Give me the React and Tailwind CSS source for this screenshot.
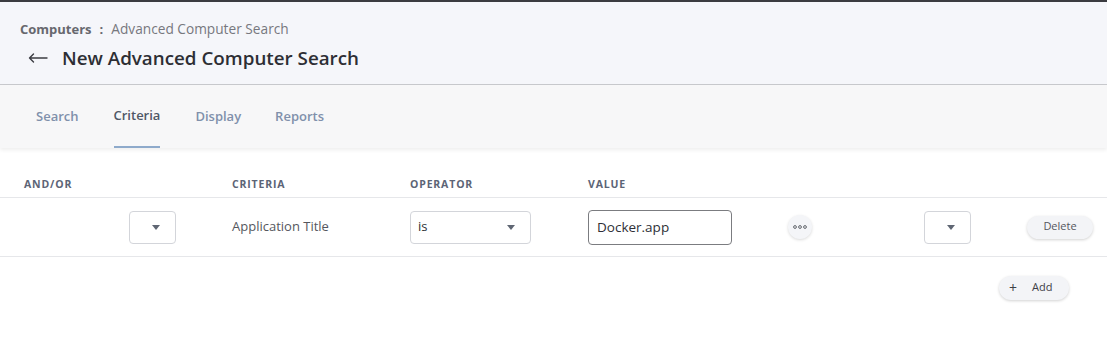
import React from "react";

function Caret() {
  return (
    <svg width="8" height="5" viewBox="0 0 8 5" className="text-[#5f6673]">
      <path d="M0 0h8L4 5z" fill="currentColor" />
    </svg>
  );
}

function SmallSelect() {
  return (
    <div className="flex h-[33px] w-[47px] items-center justify-end rounded-[4px] border border-[#d3d5da] bg-white pr-[15px]">
      <Caret />
    </div>
  );
}

export default function App() {
  return (
    <div className="min-h-[349px] bg-white font-['Open_Sans',sans-serif] text-[#2e2f36]">
      <div className="h-[2px] bg-[#3b3b40]" />
      <header className="h-[83px] border-b border-[#c9cace] bg-[#f5f6fa] px-5 pt-[19px]">
        <div className="flex items-center text-[13px] leading-4">
          <span className="font-bold text-[#67686e]">Computers</span>
          <span className="mx-[8px] font-bold text-[#67686e]">:</span>
          <span className="text-[13.7px] text-[#77787e]">Advanced Computer Search</span>
        </div>
        <div className="mt-[9px] flex items-center">
          <svg width="20" height="10" viewBox="0 0 20 10" className="ml-[8px]">
            <path d="M19 5H1.5M5.5 1L1.5 5l4 4" fill="none" stroke="#3b3c42" strokeWidth="1.4" strokeLinecap="round" strokeLinejoin="round" />
          </svg>
          <h1 className="ml-[14px] text-[18.8px] font-semibold leading-6 text-[#2d2e34]">
            New Advanced Computer Search
          </h1>
        </div>
      </header>
      <nav className="relative flex h-[63px] items-stretch bg-[#f7f7f8] bg-[radial-gradient(#eeeeee_0.6px,transparent_0.6px)] bg-[length:4px_4px] pl-9 shadow-[0_2px_4px_rgba(0,0,0,0.07)]">
        <div className="flex items-center text-[13px] font-semibold text-[#8090ab]">Search</div>
        <div className="ml-[35px] flex flex-col justify-center">
          <div className="flex flex-1 items-center text-[13px] font-semibold text-[#4f5766]">Criteria</div>
          <div className="h-[2px] bg-[#8eaacb]" />
        </div>
        <div className="ml-[35px] flex items-center text-[13px] font-semibold text-[#8090ab]">Display</div>
        <div className="ml-[34px] flex items-center text-[13px] font-semibold text-[#8090ab]">Reports</div>
      </nav>
      <div className="mt-[22px]">
        <div className="flex h-[28px] items-start border-b border-[#e6e7ea] text-[10.5px] font-bold tracking-[0.08em] text-[#5c6476]">
          <div className="w-[232px] pl-6 pt-[7px]">AND/OR</div>
          <div className="w-[178px] pt-[7px]">CRITERIA</div>
          <div className="w-[178px] pt-[7px]">OPERATOR</div>
          <div className="pt-[7px]">VALUE</div>
        </div>
        <div className="flex h-[59px] items-center border-b border-[#e6e7ea] text-[13px]">
          <div className="w-[232px] pl-[129px]">
            <SmallSelect />
          </div>
          <div className="w-[178px] text-[#55575e]">Application Title</div>
          <div className="w-[178px]">
            <div className="flex h-[33px] w-[121px] items-center justify-between rounded-[4px] border border-[#d3d5da] bg-white pl-[7px] pr-[15px] text-[#2e2f36]">
              <span>is</span>
              <Caret />
            </div>
          </div>
          <div className="w-[200px]">
            <div className="flex h-[35px] w-[144px] items-center rounded-[4px] border border-[#7b7c80] bg-white pl-[8px] text-[13.5px] text-[#2e2f36]">
              Docker.app
            </div>
          </div>
          <div className="w-[136px]">
            <div className="flex h-[24px] w-[24px] items-center justify-center rounded-full bg-[#f4f5f8] shadow-[0_1px_3px_rgba(0,0,0,0.15)]">
              <svg width="14" height="4" viewBox="0 0 14 4">
                <circle cx="2" cy="2" r="1.4" fill="none" stroke="#55585f" strokeWidth="0.9" />
                <circle cx="7" cy="2" r="1.4" fill="none" stroke="#55585f" strokeWidth="0.9" />
                <circle cx="12" cy="2" r="1.4" fill="none" stroke="#55585f" strokeWidth="0.9" />
              </svg>
            </div>
          </div>
          <div className="w-[103px]">
            <SmallSelect />
          </div>
          <button className="flex h-[23px] w-[66px] items-center justify-center rounded-full bg-[#f3f4f7] pb-[1px] text-[11px] text-[#55575e] shadow-[0_1px_3px_rgba(0,0,0,0.18)]">
            Delete
          </button>
        </div>
        <div className="flex justify-end pr-[38px] pt-[19px]">
          <button className="flex h-[24px] w-[70px] items-center gap-[15px] rounded-full bg-[#f3f4f7] pb-[1px] pl-[10px] text-[11px] text-[#3e4046] shadow-[0_1px_3px_rgba(0,0,0,0.18)]">
            <span className="text-[14px] leading-none">+</span>
            <span>Add</span>
          </button>
        </div>
      </div>
    </div>
  );
}
